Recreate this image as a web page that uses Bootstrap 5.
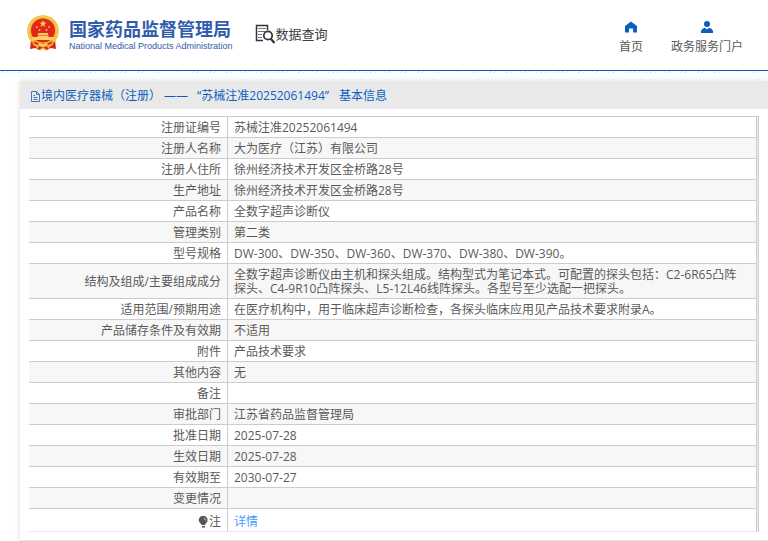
<!DOCTYPE html>
<html lang="zh-CN">
<head>
<meta charset="utf-8">
<meta name="viewport" content="width=device-width, initial-scale=1">
<title>国家药品监督管理局 数据查询</title>
<link href="https://cdn.jsdelivr.net/npm/bootstrap@5.3.0/dist/css/bootstrap.min.css" rel="stylesheet">
<style>
body { font: 12px/14px "Open Sans", "Noto Sans CJK SC", sans-serif; color: #5a5a5a; background: #fff; }
a { text-decoration: none; }
.site-header { height: 71px; border-bottom: 1px solid #005fbd; padding: 0 25px 0 26px; }
.stripe { height: 2px; background: repeating-linear-gradient(135deg, #fff 0 2px, #ece8ea 2px 3px); }
.brand { color: #2f5dab; gap: 9px; margin-top: -4px; }
.brand-cn { font: 700 18px/26px "Noto Sans CJK SC", sans-serif; width: 161px; white-space: nowrap; }
.brand-en { font: 9px/10px "Liberation Sans", sans-serif; }
.query { color: #3c3c44; font: 400 13px/18px "Noto Sans CJK SC", sans-serif; margin-left: 22px; margin-top: -2px; }
.top-link { color: #5a5a5a; gap: 6px; line-height: 16px; margin-top: 5px; }
.top-nav { gap: 28px; }
.panel { margin: 8px 0 0 20px; box-shadow: 0 0 6px rgba(0, 0, 0, .14); border-bottom: 1px solid #e4e4e4; }
.panel-title { background: #e9e9e9; border-bottom: 1px solid #e6e6f0; color: #0b5fc2; font-size: 12px; line-height: 16px; padding: 7px 10px 4px; }
.panel-body { padding: 7px 9px 8px; }
.frame { border-top: 1px solid #ccc; border-right: 1px solid #ccc; border-bottom: 1px solid #e6e6f0; padding-right: 1px; background: #f0f0f4; }
.info { width: 100%; border-collapse: separate; border-spacing: 0; border-right: 1px solid #ccc; background: #fff; }
.info th, .info td { padding: 4px 6px 2px; border-bottom: 1px solid #ccc; height: 21px; vertical-align: middle; }
.info th { width: 199px; text-align: right; font-weight: 400; border-right: 1px solid #ccc; }
.info td { padding-right: 16px; }
.info tr:nth-child(even) { background: #f7f7f7; }
.info tr:last-child > * { border-bottom: 0; height: 22px; padding-top: 6px; }
.detail { color: #409eff; }
</style>
<script src="https://cdn.jsdelivr.net/npm/bootstrap@5.3.0/dist/js/bootstrap.bundle.min.js"></script>
</head>
<body>
<header class="site-header d-flex align-items-center">
  <a class="brand d-flex align-items-center" href="#">
    <svg width="34" height="36" viewBox="0 0 34 36" aria-hidden="true">
      <path d="M5 25L4 34l5-1 4 2 4-1 4 1 4-2 5 1-1-9z" fill="#d9251c"/>
      <circle cx="17" cy="16" r="15.800" fill="#efb831"/>
      <circle cx="17" cy="16" r="14.400" fill="none" stroke="#f8d765" stroke-width="1"/>
      <circle cx="17" cy="15.500" r="12" fill="#e3261d"/>
      <path d="M17 5l1 2.500h2.700l-2.200 1.700.9 2.700-2.400-1.700-2.400 1.700.9-2.700-2.200-1.700H16z" fill="#f7cf4b"/>
      <g fill="#f3bd3c"><circle cx="11" cy="12" r="1"/><circle cx="13.500" cy="15" r="1"/><circle cx="20.500" cy="15" r="1"/><circle cx="23" cy="12" r="1"/></g>
      <path d="M12.500 18h9l1 2h-11zM11.500 20.500h11V22h5.500v3H6v-3h5.500z" fill="#f8d05a"/>
      <path d="M7 26q10 5 20 0l-2 3q-8 3-16 0z" fill="#d9251c"/>
      <path d="M13 27l4 2 4-2 1 3-5 2.500L12 30z" fill="#f4c34a"/>
      <path d="M7 29l5 3-2 2M27 29l-5 3 2 2M14 35l3-2 3 2" fill="none" stroke="#f4c34a" stroke-width="1.300"/>
    </svg>
    <span class="d-flex flex-column">
      <span class="brand-cn">国家药品监督管理局</span>
      <span class="brand-en">National Medical Products Administration</span>
    </span>
  </a>
  <a class="query d-flex align-items-center" href="#">
    <svg width="21" height="20" viewBox="0 0 21 20" fill="none" stroke="#34343f" aria-hidden="true">
      <path d="M8 16.500H1.500v-15h11V6" stroke-width="1.500"/>
      <path d="M3 4.500h8M3 7.500h7M3 10.500h4M3 13.500h4" stroke="#777"/>
      <circle cx="13" cy="11.500" r="4.200" stroke-width="1.800"/>
      <path d="M16 15l3.500 4" stroke-width="2.300"/>
    </svg>
    <span>数据查询</span>
  </a>
  <nav class="top-nav d-flex ms-auto" aria-label="快捷导航">
    <a class="top-link d-flex flex-column align-items-center" href="#">
      <svg width="12" height="12" viewBox="0 0 12 12" aria-hidden="true"><path d="M6 .5L12 5v6.500H8V7.500H4v4H0V5z" fill="#0b5fc2"/></svg>
      <span>首页</span>
    </a>
    <a class="top-link d-flex flex-column align-items-center" href="#">
      <svg width="12" height="12" viewBox="0 0 12 12" fill="#0b5fc2" aria-hidden="true"><circle cx="6" cy="3" r="3"/><path d="M0 12V10q1-3 4-3.300L6 8.500l2-1.800q3 .3 4 3.300v2z"/></svg>
      <span>政务服务门户</span>
    </a>
  </nav>
</header>
<div class="stripe"></div>
<main class="panel">
  <h1 class="panel-title d-flex align-items-center mb-0 fw-normal">
    <svg width="11" height="12" viewBox="0 0 11 12" fill="none" stroke="#0b5fc2" aria-hidden="true"><path d="M1.500 1.500h5l3 3v7h-8zM6.500 1.500v3h3M3.500 5.500H5M3.500 7.500h4M3.500 9.500h4" stroke-width=".8"/></svg>
    <span>境内医疗器械（注册） ——&ensp;&emsp14;“苏械注准20252061494”&ensp;&emsp13;基本信息</span>
  </h1>
  <div class="panel-body">
    <div class="frame">
      <table class="info">
        <tbody>
          <tr><th scope="row">注册证编号</th><td>苏械注准20252061494</td></tr>
          <tr><th scope="row">注册人名称</th><td>大为医疗（江苏）有限公司</td></tr>
          <tr><th scope="row">注册人住所</th><td>徐州经济技术开发区金桥路28号</td></tr>
          <tr><th scope="row">生产地址</th><td>徐州经济技术开发区金桥路28号</td></tr>
          <tr><th scope="row">产品名称</th><td>全数字超声诊断仪</td></tr>
          <tr><th scope="row">管理类别</th><td>第二类</td></tr>
          <tr><th scope="row">型号规格</th><td>DW-300、DW-350、DW-360、DW-370、DW-380、DW-390。</td></tr>
          <tr><th scope="row">结构及组成/主要组成成分</th><td>全数字超声诊断仪由主机和探头组成。结构型式为笔记本式。可配置的探头包括：C2-6R65凸阵探头、C4-9R10凸阵探头、L5-12L46线阵探头。各型号至少选配一把探头。</td></tr>
          <tr><th scope="row">适用范围/预期用途</th><td>在医疗机构中，用于临床超声诊断检查，各探头临床应用见产品技术要求附录A。</td></tr>
          <tr><th scope="row">产品储存条件及有效期</th><td>不适用</td></tr>
          <tr><th scope="row">附件</th><td>产品技术要求</td></tr>
          <tr><th scope="row">其他内容</th><td>无</td></tr>
          <tr><th scope="row">备注</th><td></td></tr>
          <tr><th scope="row">审批部门</th><td>江苏省药品监督管理局</td></tr>
          <tr><th scope="row">批准日期</th><td>2025-07-28</td></tr>
          <tr><th scope="row">生效日期</th><td>2025-07-28</td></tr>
          <tr><th scope="row">有效期至</th><td>2030-07-27</td></tr>
          <tr><th scope="row">变更情况</th><td></td></tr>
          <tr><th scope="row"><span class="d-flex align-items-center justify-content-end"><svg width="11" height="12" viewBox="0 0 11 12" aria-hidden="true"><path d="M5 0a4 4 0 0 1 4.500 4.500c0 2-2 2.500-2.500 4.500H3.500C3 7 .8 6.500.8 4.500A4 4 0 0 1 5 0zM4 10h3v1.500H4z" fill="#555"/><path d="M5.500 2Q7.500 2.500 7.500 4.500" fill="none" stroke="#ddd" stroke-width=".8"/></svg>注</span></th><td><a class="detail" href="#">详情</a></td></tr>
        </tbody>
      </table>
    </div>
  </div>
</main>
</body>
</html>
